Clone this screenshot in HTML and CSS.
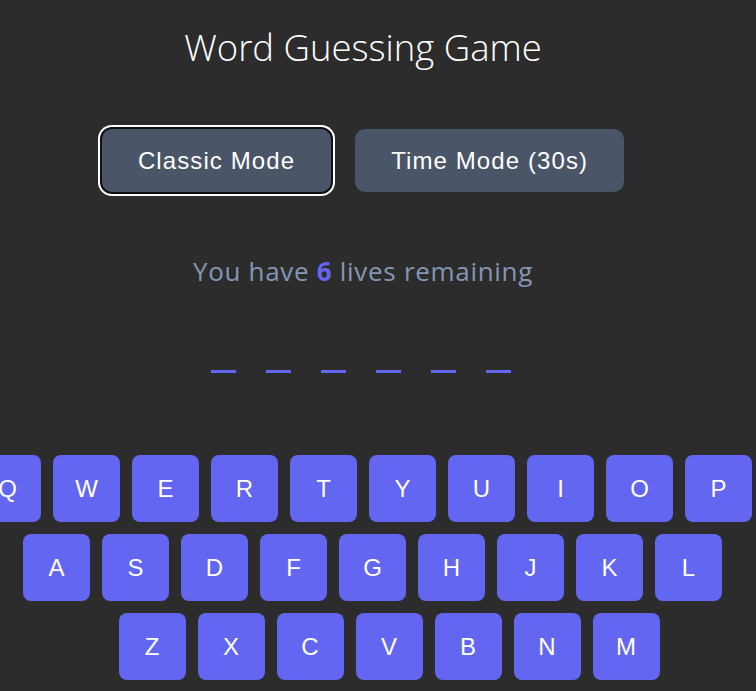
FILE: index.html
```html
<!DOCTYPE html>
<html lang="en">
<head>
<meta charset="utf-8">
<title>Word Guessing Game</title>
<link rel="stylesheet" href="styles.css">
</head>
<body>
<div class="app">
  <h1 class="title">Word Guessing Game</h1>
  <div class="modes">
    <button class="mode mode-active">Classic Mode</button>
    <button class="mode">Time Mode (30s)</button>
  </div>
  <p class="lives">You have <strong class="lives-count">6</strong> lives remaining</p>
  <div class="slots">
    <span class="slot"></span><span class="slot"></span><span class="slot"></span><span class="slot"></span><span class="slot"></span><span class="slot"></span>
  </div>
  <div class="keyboard">
    <div class="key-row">
      <button class="key">Q</button><button class="key">W</button><button class="key">E</button><button class="key">R</button><button class="key">T</button><button class="key">Y</button><button class="key">U</button><button class="key">I</button><button class="key">O</button><button class="key">P</button>
    </div>
    <div class="key-row key-row-2">
      <button class="key">A</button><button class="key">S</button><button class="key">D</button><button class="key">F</button><button class="key">G</button><button class="key">H</button><button class="key">J</button><button class="key">K</button><button class="key">L</button>
    </div>
    <div class="key-row key-row-3">
      <button class="key">Z</button><button class="key">X</button><button class="key">C</button><button class="key">V</button><button class="key">B</button><button class="key">N</button><button class="key">M</button>
    </div>
  </div>
</div>
</body>
</html>
```

FILE: styles.css
```css
html, body {
  margin: 0;
  padding: 0;
  background: #2c2c2c;
  overflow: hidden;
}

body {
  font-family: "Open Sans", "Noto Sans", sans-serif;
}

.app {
  width: 726px;
  height: 691px;
  display: flex;
  flex-direction: column;
  align-items: center;
  padding-top: 23px;
  box-sizing: border-box;
}

.title {
  margin: 0;
  font-size: 36.5px;
  font-weight: 300;
  line-height: 48px;
  color: #ffffff;
  letter-spacing: 0;
}

.modes {
  display: flex;
  gap: 24px;
  margin-top: 58px;
}

.mode {
  font-family: "Liberation Sans", Arial, sans-serif;
  font-size: 24px;
  letter-spacing: 1.1px;
  line-height: 29px;
  padding: 17px 36px;
  border: 0;
  border-radius: 10px;
  background: #4a5568;
  color: #ffffff;
}

.mode-active {
  box-shadow: 0 0 0 2px #101010, 0 0 0 4px #ffffff;
}

.lives {
  margin: 61px 0 0;
  font-size: 26px;
  line-height: 36px;
  letter-spacing: 0.7px;
  color: #8596b4;
}

.lives-count {
  color: #6366f1;
  font-weight: 700;
}

.slots {
  display: flex;
  gap: 30px;
  margin-top: 81px;
  padding-right: 4px;
}

.slot {
  display: block;
  width: 25px;
  height: 3px;
  background: #6366f1;
}

.keyboard {
  display: flex;
  flex-direction: column;
  align-items: center;
  gap: 12px;
  margin-top: 82px;
}

.key-row {
  display: flex;
  gap: 12px;
}

.key-row-2 {
  margin-left: 19px;
}

.key-row-3 {
  margin-left: 52px;
}

.key {
  width: 67px;
  height: 67px;
  flex: none;
  padding: 0;
  border: 0;
  border-radius: 8px;
  background: #6366f1;
  color: #ffffff;
  font-family: "Liberation Sans", Arial, sans-serif;
  font-size: 24px;
}
```
